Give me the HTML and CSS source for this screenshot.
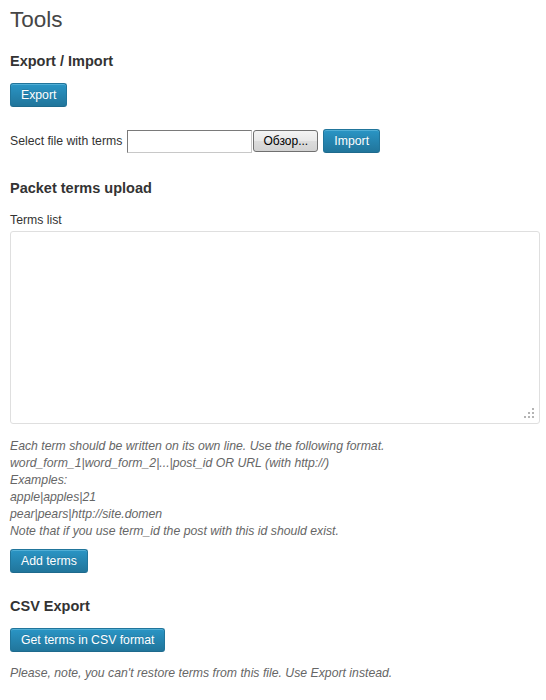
FILE: index.html
```html
<!DOCTYPE html>
<html lang="en">
<head>
  <meta charset="UTF-8">
  <title>Tools</title>
  <link rel="stylesheet" href="styles.css">
</head>
<body>
<div class="wrap">

  <h2 class="page-title">Tools</h2>

  <!-- Export / Import -->
  <h3 class="section-title">Export / Import</h3>
  <div class="row">
    <button class="button-primary">Export</button>
  </div>

  <div class="file-row">
    <span>Select file with terms</span>
    <span class="file-input">
      <span class="file-name"></span>
      <span class="file-btn">Обзор...</span>
    </span>
    <button class="button-primary">Import</button>
  </div>

  <!-- Packet upload -->
  <h3 class="section-title packet">Packet terms upload</h3>
  <div class="field-label">Terms list</div>
  <div class="textarea">
    <span class="grip">
      <svg width="10" height="10" viewBox="0 0 10 10">
        <rect x="8" y="0" width="2" height="2" fill="#b4b4b4"/>
        <rect x="4" y="4" width="2" height="2" fill="#b4b4b4"/>
        <rect x="8" y="4" width="2" height="2" fill="#b4b4b4"/>
        <rect x="0" y="8" width="2" height="2" fill="#b4b4b4"/>
        <rect x="4" y="8" width="2" height="2" fill="#b4b4b4"/>
        <rect x="8" y="8" width="2" height="2" fill="#b4b4b4"/>
      </svg>
    </span>
  </div>
  <p class="description">
    Each term should be written on its own line. Use the following format.<br>
    word_form_1|word_form_2|...|post_id OR URL (with http://)<br>
    Examples:<br>
    apple|apples|21<br>
    pear|pears|http://site.domen<br>
    Note that if you use term_id the post with this id should exist.
  </p>
  <div class="row add">
    <button class="button-primary">Add terms</button>
  </div>

  <!-- CSV -->
  <h3 class="section-title csv">CSV Export</h3>
  <div class="row">
    <button class="button-primary">Get terms in CSV format</button>
  </div>
  <p class="description note">Please, note, you can't restore terms from this file. Use Export instead.</p>

</div>
</body>
</html>
```

FILE: styles.css
```css
* { box-sizing: border-box; }

body {
  margin: 0;
  background: #fff;
  color: #333;
  font-family: "Liberation Sans", Arial, sans-serif;
  font-size: 12.25px;
}

.wrap {
  padding: 0 6px 0 10px;
}

.page-title {
  margin: 0;
  padding-top: 5px;
  font-size: 22.5px;
  font-weight: normal;
  line-height: 29px;
  color: #464646;
}

.section-title {
  margin: 18px 0 0;
  font-size: 14.5px;
  line-height: 18px;
  font-weight: bold;
  color: #333;
}

.row {
  margin-top: 13px;
}

.button-primary {
  display: inline-block;
  height: 24px;
  padding: 0 10px;
  border: 1px solid #21759b;
  border-bottom-color: #1e6a8d;
  border-radius: 3px;
  background: linear-gradient(to bottom, #2a95c5, #21759b);
  box-shadow: inset 0 1px 0 rgba(120,200,230,0.5);
  color: #fff;
  font-family: inherit;
  font-size: 12.25px;
  line-height: 22px;
  text-shadow: 0 -1px 0 rgba(0,0,0,0.1);
  cursor: pointer;
}

/* FILE */

.file-row {
  margin-top: 22px;
  display: flex;
  align-items: center;
}

.file-row > span:first-child {
  margin-right: 5px;
}

.file-input {
  display: flex;
  align-items: center;
  margin-right: 5px;
}

.file-name {
  width: 125px;
  height: 23px;
  border: 1px solid #c8c8c8;
  border-top-color: #7a7a7a;
  border-left-color: #7a7a7a;
  background: #fff;
}

.file-btn {
  width: 65px;
  height: 22px;
  margin-left: 1px;
  border: 1px solid #707070;
  border-radius: 3px;
  background: linear-gradient(to bottom, #f4f4f4 0%, #e8e8e8 50%, #dcdcdc 51%, #d2d2d2 100%);
  color: #000;
  font-size: 12px;
  line-height: 20px;
  text-align: center;
}

/* TEXTAREA */

.packet {
  margin-top: 26px;
}

.field-label {
  margin-top: 15px;
  line-height: 17px;
}

.textarea {
  position: relative;
  margin-top: 2px;
  height: 193px;
  width: 530px;
  border: 1px solid #dfdfdf;
  border-radius: 3px;
  background: #fff;
}

.grip {
  position: absolute;
  right: 5px;
  bottom: 5px;
  line-height: 0;
}

.description {
  margin: 14px 0 0;
  font-style: italic;
  color: #666;
  line-height: 17px;
}

.add {
  margin-top: 9px;
}

.csv {
  margin-top: 24px;
}

.note {
  margin-top: 13px;
}
```
